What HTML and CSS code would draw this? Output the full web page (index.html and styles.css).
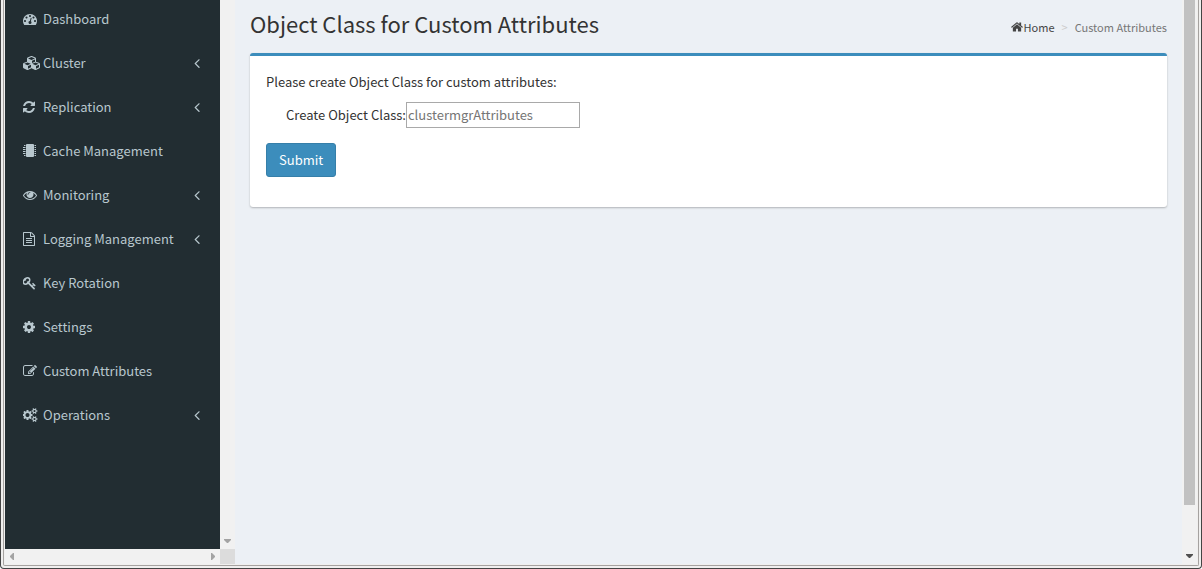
FILE: index.html
```html
<!DOCTYPE html>
<html lang="en">
<head>
<meta charset="utf-8">
<title>Custom Attributes</title>
<link rel="stylesheet" href="styles.css">
</head>
<body>
<svg class="defs" aria-hidden="true">
  <symbol id="angle" viewBox="0 0 1792 1792"><path d="M1203 544q0 13-10 23l-393 393 393 393q10 10 10 23t-10 23l-50 50q-10 10-23 10t-23-10l-466-466q-10-10-10-23t10-23l466-466q10-10 23-10t23 10l50 50q10 10 10 23z"/></symbol>
</svg>
<div class="window">
<div class="viewport">
  <aside class="sidebar">
    <nav class="menu">
      <a class="item" href="#"><span class="icon"><svg class="i14" viewBox="0 0 1792 1792"><path d="M384 1152q0-53-37.500-90.500t-90.500-37.500-90.500 37.500-37.500 90.500 37.500 90.500 90.500 37.500 90.500-37.500 37.500-90.500zm192-448q0-53-37.500-90.500t-90.500-37.500-90.500 37.500-37.500 90.500 37.500 90.500 90.500 37.500 90.500-37.500 37.500-90.500zm428 481l101-382q6-26-7.500-48.500t-38.500-29.500-48 6.500-30 39.500l-101 382q-60 5-107 43.500t-63 98.500q-20 77 20 146t117 89 146-20 89-117q16-60-6-117t-72-91zm660-33q0-53-37.500-90.500t-90.500-37.500-90.500 37.500-37.500 90.500 37.500 90.500 90.500 37.500 90.500-37.500 37.500-90.500zm-640-640q0-53-37.500-90.500t-90.500-37.500-90.500 37.500-37.500 90.500 37.500 90.500 90.500 37.500 90.500-37.500 37.500-90.500zm448 192q0-53-37.500-90.500t-90.500-37.500-90.500 37.500-37.500 90.500 37.500 90.500 90.500 37.500 90.500-37.500 37.500-90.500zm320 448q0 261-141 483-19 29-54 29h-1402q-35 0-54-29-141-221-141-483 0-182 71-348t191-286 286-191 348-71 348 71 286 191 191 286 71 348z"/></svg></span><span class="label">Dashboard</span></a>
      <a class="item" href="#"><span class="icon"><svg class="i18" viewBox="0 0 2304 1792"><path d="M640 1632l384-192v-314l-384 164v342zm-64-454l404-173-404-173-404 173zm1088 454l384-192v-314l-384 164v342zm-64-454l404-173-404-173-404 173zm-448-293l384-165v-266l-384 164v267zm-64-379l441-189-441-189-441 189zm1088 518v416q0 36-19 67t-52 47l-448 224q-25 14-57 14t-57-14l-448-224q-4-2-7-4-2 2-7 4l-448 224q-25 14-57 14t-57-14l-448-224q-33-16-52-47t-19-67v-416q0-38 21.500-70t56.500-48l434-186v-400q0-38 21.500-70t56.500-48l448-192q23-10 50-10t50 10l448 192q35 16 56.500 48t21.500 70v400l434 186q36 16 57 48t21 70z"/></svg></span><span class="label">Cluster</span><svg class="angle"><use href="#angle"/></svg></a>
      <a class="item" href="#"><span class="icon"><svg class="i12" viewBox="128 0 1536 1792"><path d="M1639 1056q0 5-1 7-64 268-268 434.500t-478 166.500q-146 0-282.500-55t-243.500-157l-129 129q-19 19-45 19t-45-19-19-45v-448q0-26 19-45t45-19h448q26 0 45 19t19 45-19 45l-137 137q71 66 161 102t187 36q134 0 250-65t186-179q11-17 53-117 8-23 30-23h192q13 0 22.500 9.500t9.500 22.500zm25-800v448q0 26-19 45t-45 19h-448q-26 0-45-19t-19-45 19-45l138-138q-148-137-349-137-134 0-250 65t-186 179q-11 17-53 117-8 23-30 23h-199q-13 0-22.500-9.500t-9.500-22.500v-7q65-268 270-434.500t480-166.500q146 0 284 55.500t245 156.500l130-129q19-19 45-19t45 19 19 45z"/></svg></span><span class="label">Replication</span><svg class="angle"><use href="#angle"/></svg></a>
      <a class="item" href="#"><span class="icon"><svg class="i14" viewBox="0 0 14 14"><path d="M3 1q0-1 1-1h6q1 0 1 1v11q0 1-1 1H4q-1 0-1-1zM1 1h1.500v1H1zM0 3h2.500v1H0zM0 5h2.500v1H0zM0 7h2.500v1H0zM0 9h2.500v1H0zM1 11h1.500v1H1zM11.500 1H13v1h-1.500zM11.500 3H13v1h-1.500zM11.500 5H13v1h-1.500zM11.500 7H13v1h-1.500zM11.500 9H13v1h-1.500zM11.500 11H13v1h-1.500z"/></svg></span><span class="label">Cache Management</span></a>
      <a class="item" href="#"><span class="icon"><svg class="i14" viewBox="0 0 1792 1792"><path d="M1664 960q-152-236-381-353 61 104 61 225 0 185-131.500 316.500t-316.500 131.500-316.500-131.500-131.500-316.500q0-121 61-225-229 117-381 353 133 205 333.500 326.500t434.500 121.500 434.500-121.500 333.500-326.500zm-720-384q0-20-14-34t-34-14q-125 0-214.500 89.500t-89.500 214.500q0 20 14 34t34 14 34-14 14-34q0-86 61-147t147-61q20 0 34-14t14-34zm848 384q0 34-20 69-140 230-376.500 368.500t-499.500 138.500-499.500-139-376.500-368q-20-35-20-69t20-69q140-229 376.500-368t499.500-139 499.500 139 376.500 368q20 35 20 69z"/></svg></span><span class="label">Monitoring</span><svg class="angle"><use href="#angle"/></svg></a>
      <a class="item" href="#"><span class="icon"><svg class="i12" viewBox="128 0 1536 1792"><path d="M1596 380q28 28 48 76t20 88v1152q0 40-28 68t-68 28h-1344q-40 0-68-28t-28-68v-1600q0-40 28-68t68-28h896q40 0 88 20t76 48zm-444-244v376h376q-10-29-22-41l-313-313q-12-12-41-22zm384 1528v-1024h-416q-40 0-68-28t-28-68v-416h-768v1536h1280zm-1024-864q0-14 9-23t23-9h704q14 0 23 9t9 23v64q0 14-9 23t-23 9h-704q-14 0-23-9t-9-23v-64zm736 224q14 0 23 9t9 23v64q0 14-9 23t-23 9h-704q-14 0-23-9t-9-23v-64q0-14 9-23t23-9h704zm0 256q14 0 23 9t9 23v64q0 14-9 23t-23 9h-704q-14 0-23-9t-9-23v-64q0-14 9-23t23-9h704z"/></svg></span><span class="label">Logging Management</span><svg class="angle"><use href="#angle"/></svg></a>
      <a class="item" href="#"><span class="icon"><svg class="i14" viewBox="64 0 1792 1792"><path d="M832 512q0-80-56-136t-136-56-136 56-56 136q0 42 19 83-41-19-83-19-80 0-136 56t-56 136 56 136 136 56 136-56 56-136q0-42-19-83 41 19 83 19 80 0 136-56t56-136zm851 704q0 17-49 66t-66 49q-9 0-28.500-16t-36.500-33-38.500-40-24.500-26l-96 96 220 220q28 28 28 68 0 42-39 81t-81 39q-40 0-68-28l-671-671q-176 131-365 131-163 0-265.500-102.500t-102.500-265.500q0-160 95-313t248-248 313-95q163 0 265.500 102.500t102.500 265.500q0 189-131 365l355 355 96-96q-3-3-26-24.500t-40-38.500-33-36.500-16-28.500q0-17 49-66t66-49q13 0 23 10 6 6 46 44.500t82 79.500 86.500 86 73 78 28.500 41z"/></svg></span><span class="label">Key Rotation</span></a>
      <a class="item" href="#"><span class="icon"><svg class="i12" viewBox="128 0 1536 1792"><path d="M1152 896q0-106-75-181t-181-75-181 75-75 181 75 181 181 75 181-75 75-181zm512-109v222q0 12-8 23t-20 13l-185 28q-19 54-39 91 35 50 107 138 10 12 10 25t-9 23q-27 37-99 108t-94 71q-12 0-26-9l-138-108q-44 23-91 38-16 136-29 186-7 28-36 28h-222q-14 0-24.500-8.500t-11.500-21.500l-28-184q-49-16-90-37l-141 107q-10 9-25 9-14 0-25-11-126-114-165-168-7-10-7-23 0-12 8-23 15-21 51-66.500t54-70.500q-27-50-41-99l-183-27q-13-2-21-12.500t-8-23.500v-222q0-12 8-23t19-13l186-28q14-46 39-92-40-57-107-138-10-12-10-24 0-10 9-23 26-36 98.500-107.500t94.500-71.500q13 0 26 10l138 107q44-23 91-38 16-136 29-186 7-28 36-28h222q14 0 24.500 8.500t11.500 21.500l28 184q49 16 90 37l142-107q9-9 24-9 13 0 25 10 129 119 165 170 7 8 7 22 0 12-8 23-15 21-51 66.500t-54 70.500q26 50 41 98l183 28q13 2 21 12.500t8 23.500z"/></svg></span><span class="label">Settings</span></a>
      <a class="item" href="#"><span class="icon"><svg class="i14" viewBox="0 0 1792 1792"><path d="M888 1184l116-116-152-152-116 116v56h96v96h56zm440-720q-16-16-33 1l-350 350q-17 17-1 33t33-1l350-350q17-17 1-33zm80 594v190q0 119-84.500 203.500t-203.500 84.500h-832q-119 0-203.500-84.500t-84.500-203.500v-832q0-119 84.500-203.500t203.500-84.500h832q63 0 117 25 15 7 18 23 3 17-9 29l-49 49q-14 14-32 8-23-6-45-6h-832q-66 0-113 47t-47 113v832q0 66 47 113t113 47h832q66 0 113-47t47-113v-126q0-13 9-22l64-64q15-15 35-7t20 29zm-96-738l288 288-672 672h-288v-288zm444 132l-92 92-288-288 92-92q28-28 68-28t68 28l152 152q28 28 28 68t-28 68z"/></svg></span><span class="label">Custom Attributes</span></a>
      <a class="item" href="#"><span class="icon"><svg class="i15" viewBox="0 0 1920 1792"><path d="M832 896q0-106-75-181t-181-75-181 75-75 181 75 181 181 75 181-75 75-181zm768 512q0-52-38-90t-90-38-90 38-38 90q0 53 37.500 90.500t90.500 37.500 90.500-37.500 37.500-90.500zm0-1024q0-52-38-90t-90-38-90 38-38 90q0 53 37.500 90.500t90.500 37.500 90.500-37.500 37.500-90.500zm-384 421v185q0 10-7 19.500t-16 10.500l-155 24q-11 35-32 76 34 48 90 115 7 11 7 20 0 12-7 19-23 30-82.500 89.500t-78.500 59.500q-11 0-21-7l-115-90q-37 19-77 31-11 108-23 155-7 24-30 24h-186q-11 0-20-7.500t-10-17.500l-23-153q-34-10-75-31l-118 89q-7 7-20 7-11 0-21-8-144-133-144-160 0-9 7-19 10-14 41-53t47-61q-23-44-35-82l-152-24q-10-1-17-9.500t-7-19.500v-185q0-10 7-19.500t16-10.500l155-24q11-35 32-76-34-48-90-115-7-11-7-20 0-12 7-20 22-30 82-89t79-59q11 0 21 7l115 90q34-18 77-32 11-108 23-154 7-24 30-24h186q11 0 20 7.500t10 17.500l23 153q34 10 75 31l118-89q8-7 20-7 11 0 21 8 144 133 144 160 0 8-7 19-12 16-42 54t-45 60q23 48 34 82l152 23q10 2 17 10.500t7 19.500zm640 533v140q0 16-149 31-12 27-30 52 51 113 51 138 0 4-4 7-122 71-124 71-8 0-46-47t-52-68q-20 2-30 2t-30-2q-14 21-52 68t-46 47q-2 0-124-71-4-3-4-7 0-25 51-138-18-25-30-52-149-15-149-31v-140q0-16 149-31 13-29 30-52-51-113-51-138 0-4 4-7 4-2 35-20t59-34 30-16q8 0 46 46.500t52 67.500q20-2 30-2t30 2q51-71 92-112l6-2q4 0 124 70 4 3 4 7 0 25-51 138 17 23 30 52 149 15 149 31zm0-1024v140q0 16-149 31-12 27-30 52 51 113 51 138 0 4-4 7-122 71-124 71-8 0-46-47t-52-68q-20 2-30 2t-30-2q-14 21-52 68t-46 47q-2 0-124-71-4-3-4-7 0-25 51-138-18-25-30-52-149-15-149-31v-140q0-16 149-31 13-29 30-52-51-113-51-138 0-4 4-7 4-2 35-20t59-34 30-16q8 0 46 46.500t52 67.500q20-2 30-2t30 2q51-71 92-112l6-2q4 0 124 70 4 3 4 7 0 25-51 138 17 23 30 52 149 15 149 31z"/></svg></span><span class="label">Operations</span><svg class="angle"><use href="#angle"/></svg></a>
    </nav>
    <div class="vtrack"><svg class="arrow-v" viewBox="0 0 7 4"><path d="M0 0h7v1L4 4H3L0 1z"/></svg></div>
    <div class="htrack"><svg class="arrow-h" viewBox="0 0 4 7"><path d="M4 0v7H3L0 4V3l3-3z"/></svg><svg class="arrow-h" viewBox="0 0 4 7"><path d="M0 0v7h1l3-3V3L1 0z"/></svg></div>
    <div class="corner"></div>
  </aside>
  <main class="content">
    <header class="header">
      <h1 class="title">Object Class for Custom Attributes</h1>
      <nav class="crumbs"><a class="home" href="#"><svg class="i12" viewBox="64 0 1664 1792"><path d="M1472 992v480q0 26-19 45t-45 19h-384v-384h-256v384h-384q-26 0-45-19t-19-45v-480q0-1 .5-3t.5-3l575-474 575 474q1 2 1 6zm223-69l-62 74q-8 9-21 11h-3q-13 0-21-7l-692-577-692 577q-12 8-24 7-13-2-21-11l-62-74q-8-10-7-23.500t11-21.500l719-599q32-26 76-26t76 26l244 204v-195q0-14 9-23t23-9h192q14 0 23 9t9 23v408l219 182q10 8 11 21.500t-7 23.500z"/></svg>Home</a><span class="sep">&gt;</span><span class="current">Custom Attributes</span></nav>
    </header>
    <form class="box">
      <p class="intro">Please create Object Class for custom attributes:</p>
      <div class="field"><label for="oc">Create Object Class:</label><input class="text" id="oc" type="text" placeholder="clustermgrAttributes"></div>
      <button class="submit" type="button">Submit</button>
    </form>
  </main>
  <div class="page-scroll"><div class="thumb"></div><svg class="arrow-v" viewBox="0 0 7 4"><path d="M0 0h7v1L4 4H3L0 1z"/></svg></div>
</div>
</div>
</body>
</html>
```
FILE: styles.css
```css
* { box-sizing: border-box; }
body {
  margin: 0;
  height: 100vh;
  overflow: hidden;
  background: #fff;
  color: #333;
  font: 13px/20px "Noto Sans CJK SC", "Noto Sans", sans-serif;
}
.defs { display: none; }
svg { display: block; flex: none; fill: currentColor; }
a { color: inherit; text-decoration: none; }

.window {
  height: 100%;
  padding: 0 2px 2px;
  border: solid #444;
  border-width: 0 1px 1px;
  border-radius: 0 0 4px 4px;
  background: #f0efee;
}
.viewport {
  display: flex;
  height: 100%;
  padding: 0 1px 1px;
  border: solid #a5a2a0;
  border-width: 0 1px 1px;
  border-radius: 0 0 2px 2px;
}

.sidebar {
  display: grid;
  flex: none;
  grid-template-columns: 215px 15px;
  grid-template-rows: minmax(0, 1fr) 15px;
}
.menu { overflow: hidden; background: #222d32; color: #b8c7ce; }
.item {
  display: flex;
  align-items: center;
  height: 44px;
  padding: 0 15px 0 18px;
}
.item:first-child { margin-top: -3px; }
.icon { width: 20px; flex: none; }
.label { flex: 1; white-space: nowrap; }
.i12 { width: 12px; height: 14px; }
.i14 { width: 14px; height: 14px; }
.i15 { width: 15px; height: 14px; }
.i18 { width: 18px; height: 14px; }
.angle { width: 16px; height: 16px; }

.vtrack, .htrack { display: flex; background: #f1f1f1; color: #a3a3a3; }
.vtrack { align-items: flex-end; justify-content: center; padding-bottom: 6px; }
.htrack { align-items: center; justify-content: space-between; padding: 0 5px; }
.corner { background: #dcdcdc; }
.arrow-v { width: 7px; height: 4px; }
.arrow-h { width: 4px; height: 7px; }

.content { flex: 1; min-width: 0; padding: 10px 15px; background: #ecf0f5; }
.header {
  display: flex;
  align-items: flex-start;
  justify-content: space-between;
  margin-bottom: 17px;
}
.title { margin: 0; font-size: 22px; line-height: 26px; font-weight: 400; }
.crumbs { display: flex; font-size: 11px; line-height: 16px; padding-top: 9px; }
.home { display: flex; align-items: center; gap: 1px; color: #444; }
.sep { padding: 0 7px; color: #ccc; }
.current { color: #777; }

.box {
  padding: 16px 16px 30px;
  border-top: 3px solid #3c8dbc;
  border-radius: 3px;
  background: #fff;
  box-shadow: 0 1px 2px rgba(0, 0, 0, .25);
}
.intro { margin: 0 0 10px; }
.field { display: flex; align-items: center; margin: 0 0 15px 20px; }
.text {
  width: 174px;
  height: 26px;
  padding: 0 1px 2px;
  border: 1px solid #a9a9a9;
  background: #fff;
  color: #333;
  font: inherit;
}
.text::placeholder { color: #757575; opacity: 1; }
.submit {
  display: block;
  height: 34px;
  padding: 0 12px;
  border: 1px solid #367fa9;
  border-radius: 3px;
  background: #3c8dbc;
  color: #fff;
  font: inherit;
}

.page-scroll {
  display: flex;
  flex: none;
  flex-direction: column;
  align-items: center;
  width: 15px;
  padding: 0 2px 6px;
  background: #f1f1f1;
  color: #505050;
}
.thumb { flex: 1; width: 11px; margin-bottom: 49px; background: #c1c1c1; }
```
